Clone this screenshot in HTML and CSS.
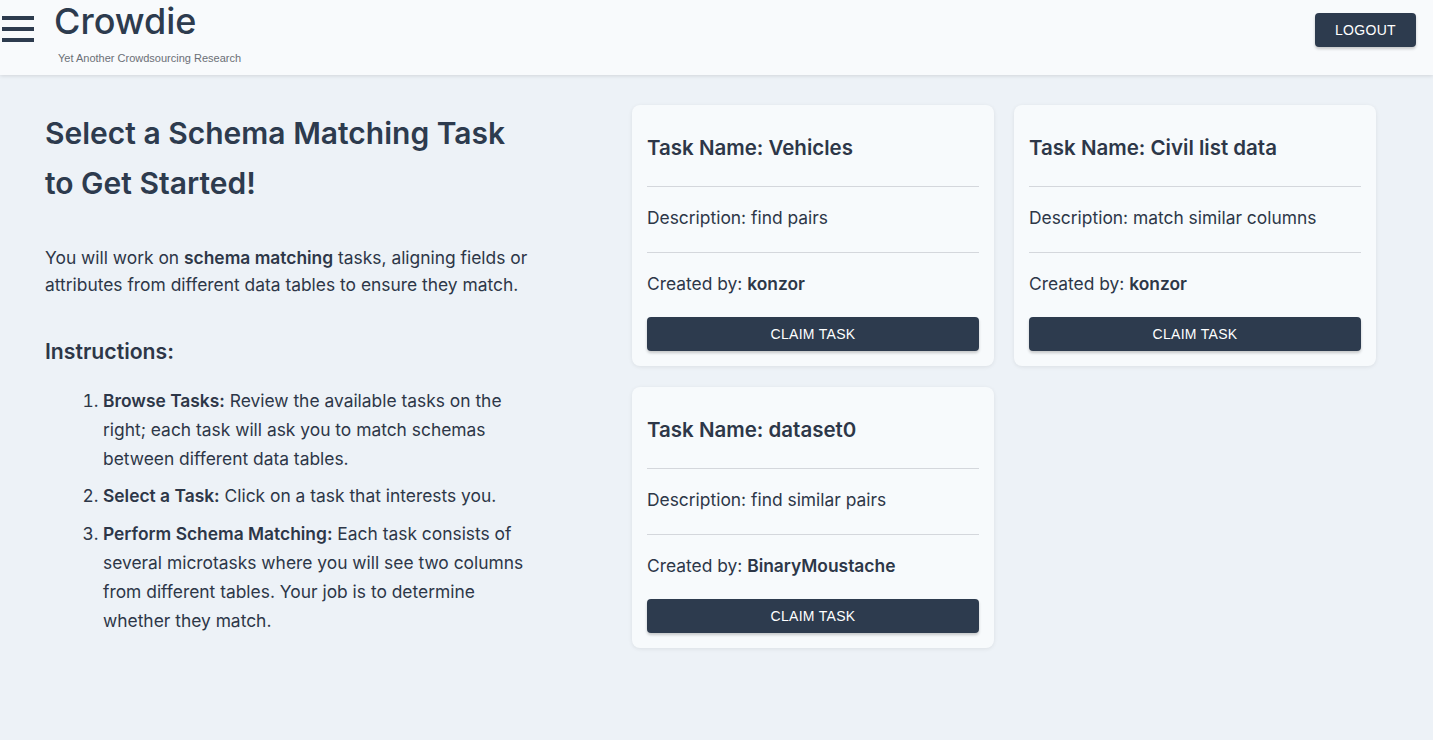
FILE: index.html
```html
<!DOCTYPE html>
<html lang="en">
<head>
<meta charset="utf-8">
<title>Crowdie</title>
<link rel="stylesheet" href="styles.css">
</head>
<body>
<header class="topbar">
  <div class="brand">
    <button class="menu" aria-label="menu">
      <svg width="32" height="28" viewBox="0 0 32 28"><rect x="0" y="0" width="32" height="4" fill="#2d3b4e"/><rect x="0" y="11" width="32" height="4" fill="#2d3b4e"/><rect x="0" y="22" width="32" height="4" fill="#2d3b4e"/></svg>
    </button>
    <div class="titles">
      <div class="logo">Crowdie</div>
      <div class="tagline">Yet Another Crowdsourcing Research</div>
    </div>
  </div>
  <button class="btn logout">LOGOUT</button>
</header>
<main class="content">
  <section class="intro">
    <h1>Select a Schema Matching Task to Get Started!</h1>
    <p>You will work on <b>schema matching</b> tasks, aligning fields or attributes from different data tables to ensure they match.</p>
    <h2>Instructions:</h2>
    <ol>
      <li><b>Browse Tasks:</b> Review the available tasks on the right; each task will ask you to match schemas between different data tables.</li>
      <li><b>Select a Task:</b> Click on a task that interests you.</li>
      <li><b>Perform Schema Matching:</b> Each task consists of several microtasks where you will see two columns from different tables. Your job is to determine whether they match.</li>
    </ol>
  </section>
  <section class="tasks">
    <div class="card">
      <h3>Task Name: Vehicles</h3>
      <hr>
      <div class="row">Description: find pairs</div>
      <hr>
      <div class="row">Created by: <b>konzor</b></div>
      <button class="btn claim">CLAIM TASK</button>
    </div>
    <div class="card">
      <h3>Task Name: Civil list data</h3>
      <hr>
      <div class="row">Description: match similar columns</div>
      <hr>
      <div class="row">Created by: <b>konzor</b></div>
      <button class="btn claim">CLAIM TASK</button>
    </div>
    <div class="card">
      <h3>Task Name: dataset0</h3>
      <hr>
      <div class="row">Description: find similar pairs</div>
      <hr>
      <div class="row">Created by: <b>BinaryMoustache</b></div>
      <button class="btn claim">CLAIM TASK</button>
    </div>
  </section>
</main>
</body>
</html>
```
FILE: styles.css
```css
html, body {
  margin: 0;
  padding: 0;
}
body {
  background: #edf2f7;
  font-family: Inter, "Noto Sans", sans-serif;
  color: #2d3748;
  min-height: 740px;
}
.topbar {
  height: 75px;
  box-sizing: border-box;
  background: #f8fafc;
  box-shadow: 0 1px 4px rgba(0,0,0,0.12);
  display: flex;
  justify-content: space-between;
  align-items: flex-start;
  padding: 0 17px 0 2px;
}
.brand {
  display: flex;
  align-items: flex-start;
}
.menu {
  background: none;
  border: 0;
  padding: 0;
  margin-top: 16px;
  display: block;
  line-height: 0;
}
.titles {
  margin-left: 20px;
}
.logo {
  font-family: Inter, sans-serif;
  font-size: 36px;
  line-height: 42px;
  font-weight: 500;
  color: #2d3b4e;
}
.tagline {
  font-family: "Liberation Sans", Arial, sans-serif;
  font-size: 11px;
  color: #6b6f76;
  margin-left: 4px;
  margin-top: 10px;
}
.btn {
  font-family: "Liberation Sans", Arial, sans-serif;
  background: #2d3b4e;
  color: #fff;
  border: 0;
  border-radius: 4px;
  box-shadow: 0 2px 3px rgba(0,0,0,0.2);
  font-size: 14px;
  letter-spacing: 0.3px;
  cursor: pointer;
}
.logout {
  margin-top: 13px;
  width: 101px;
  height: 34px;
}
.content {
  display: flex;
  padding: 30px 0 0 45px;
}
.intro {
  width: 492px;
  flex: none;
}
.intro h1 {
  margin: 0;
  padding-top: 3px;
  font-size: 30px;
  line-height: 50px;
  font-weight: 600;
  color: #2d3b4e;
}
.intro p {
  font-size: 17.4px;
  line-height: 27px;
  margin: 35.5px 0 0;
}
.intro h2 {
  font-size: 21.2px;
  font-weight: 600;
  margin: 38.5px 0 0;
  line-height: 30px;
}
.intro ol {
  margin: 19.5px 0 0;
  padding-left: 58px;
  font-size: 17.4px;
  line-height: 29px;
}
.intro li {
  margin-bottom: 8.5px;
}
.intro b {
  font-weight: 600;
}
.tasks {
  margin-left: 95px;
  display: grid;
  grid-template-columns: 362px 362px;
  gap: 21px 20px;
  align-content: start;
  align-items: start;
}
.card {
  background: #f7fafc;
  border-radius: 8px;
  box-shadow: 0 1px 4px rgba(0,0,0,0.08);
  padding: 23px 15px 15px;
  display: flex;
  flex-direction: column;
}
.card h3 {
  margin: 0;
  font-size: 20.5px;
  font-weight: 600;
  line-height: 39px;
}
.card hr {
  border: 0;
  border-top: 1px solid #d4d7dc;
  margin: 19px 0 0;
  width: 100%;
}
.row {
  font-size: 17.4px;
  line-height: 28px;
  padding-top: 17px;
}
.row + hr {
  margin-top: 20px;
}
.row b {
  font-weight: 600;
}
.claim {
  margin-top: 19px;
  height: 34px;
  width: 100%;
}
```
